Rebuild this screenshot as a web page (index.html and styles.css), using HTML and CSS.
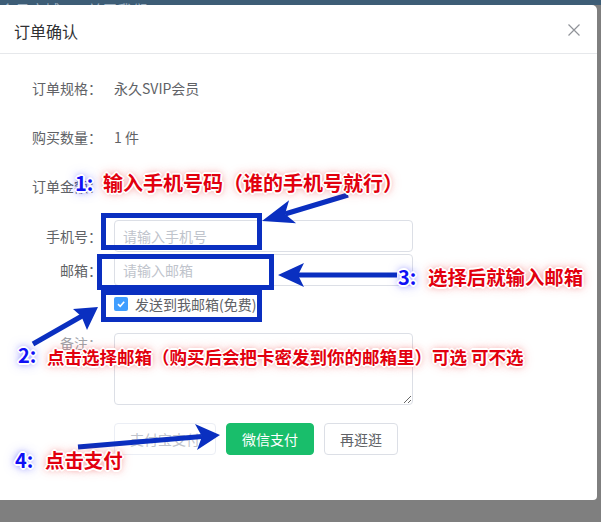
FILE: index.html
```html
<!DOCTYPE html>
<html lang="zh-CN">
<head>
    <meta charset="UTF-8">
    <title>订单确认</title>
    <link rel="stylesheet" href="styles.css">
</head>
<body>
<div class="page">
    <div class="topbar">
        <span>会员商城</span>
        <span>关于我们</span>
    </div>

    <div class="dialog">
        <div class="dialog-header">
            <span class="dialog-title">订单确认</span>
            <span class="dialog-close">
                <svg width="12" height="12" viewBox="0 0 12 12"><path d="M0.5 0.5L11.5 11.5M11.5 0.5L0.5 11.5" stroke="#909399" stroke-width="1.2" fill="none"/></svg>
            </span>
        </div>

        <div class="dialog-body">
            <div class="info-list">
                <div class="info-row"><span class="row-label">订单规格：</span><span class="row-value">永久SVIP会员</span></div>
                <div class="info-row"><span class="row-label">购买数量：</span><span class="row-value">1 件</span></div>
                <div class="info-row"><span class="row-label">订单金额：</span><span class="row-value"></span></div>
            </div>

            <form class="order-form">
                <div class="form-row">
                    <label class="row-label">手机号：</label>
                    <input type="text" class="text-input" placeholder="请输入手机号">
                </div>
                <div class="form-row">
                    <label class="row-label">邮箱：</label>
                    <input type="text" class="text-input" placeholder="请输入邮箱">
                </div>
                <div class="check-row">
                    <span class="check-box">
                        <svg width="10" height="10" viewBox="0 0 10 10"><path d="M2 5.2L4.2 7.3L8.2 2.8" stroke="#fff" stroke-width="1.6" fill="none"/></svg>
                    </span>
                    <span class="check-text">发送到我邮箱(免费)</span>
                </div>
                <div class="area-row">
                    <label class="row-label area-label">备注：</label>
                    <textarea class="text-area"></textarea>
                </div>
                <div class="button-row">
                    <button type="button" class="btn btn-disabled" disabled>支付宝支付</button>
                    <button type="button" class="btn btn-wechat">微信支付</button>
                    <button type="button" class="btn btn-plain">再逛逛</button>
                </div>
            </form>
        </div>
    </div>

    <!-- annotations drawn on top of the dialog -->
    <div class="notes">
        <svg class="marks" width="601" height="522" viewBox="0 0 601 522">
            <g fill="none" stroke="#0a2fc0" stroke-width="5">
                <rect x="103.5" y="215.5" width="156" height="32"/>
                <rect x="99.5" y="256.5" width="172" height="31"/>
                <rect x="103.5" y="292.5" width="156" height="27"/>
                <line x1="348" y1="195" x2="285" y2="214"/>
                <line x1="397" y1="275" x2="298" y2="275"/>
                <line x1="33" y1="344" x2="82" y2="316"/>
                <line x1="78" y1="447" x2="202" y2="436.5"/>
            </g>
            <g fill="#0a2fc0">
                <polygon points="262,221 289.1,200.2 285,214.1 296.1,223.2"/>
                <polygon points="278,275 304,263 298,275 304,287"/>
                <polygon points="98,307 73,309 81.5,316.5 87,330"/>
                <polygon points="220,435 195,424 202,436.5 197,450"/>
            </g>
        </svg>

        <div class="num n1">1:</div>
        <div class="tip t1">输入手机号码（谁的手机号就行）</div>

        <div class="num n2">2:</div>
        <div class="tip t2">点击选择邮箱（购买后会把卡密发到你的邮箱里）可选 可不选</div>

        <div class="num n3">3:</div>
        <div class="tip t3">选择后就输入邮箱</div>

        <div class="num n4">4:</div>
        <div class="tip t4">点击支付</div>
    </div>
</div>
</body>
</html>
```

FILE: styles.css
```css
body {
    margin: 0;
    background-color: #7f7f7f;
    font-family: "Noto Sans CJK SC", "Microsoft YaHei", sans-serif;
}

.page {
    position: relative;
    width: 601px;
    height: 522px;
    overflow: hidden;
    background-color: #7f7f7f;
}

.topbar {
    height: 5px;
    overflow: hidden;
    background-color: #3d5d76;
    color: #9fb2c2;
    font-size: 15px;
    line-height: 20px;
    white-space: nowrap;
}

.topbar span {
    display: inline-block;
    margin-top: -14px;
    margin-right: 24px;
}

.dialog {
    width: 597px;
    height: 495px;
    background-color: #fff;
    border-radius: 0 5px 4px 0;
    box-sizing: border-box;
}

.dialog-header {
    display: flex;
    justify-content: space-between;
    align-items: flex-start;
    padding: 16px 17px 12px 14px;
    border-bottom: 1px solid #e6e8eb;
}

.dialog-title {
    font-size: 16px;
    line-height: 20px;
    color: #303133;
}

.dialog-close {
    display: block;
    width: 12px;
    height: 12px;
    margin-top: 3px;
}

.dialog-close svg {
    display: block;
}

.dialog-body {
    padding: 18px 20px 0 20px;
}

.info-list {
    display: flex;
    flex-direction: column;
    gap: 17px;
    margin-bottom: 18px;
}

.info-row,
.form-row {
    display: flex;
    align-items: center;
    height: 32px;
    font-size: 14px;
    color: #606266;
}

.row-label {
    width: 94px;
    padding-right: 12px;
    box-sizing: border-box;
    text-align: right;
    flex-shrink: 0;
}

.row-value {
    color: #606266;
}

.order-form {
    display: flex;
    flex-direction: column;
    gap: 2px;
    margin: 0;
}

.text-input {
    width: 299px;
    height: 32px;
    box-sizing: border-box;
    padding: 0 8px;
    border: 1px solid #dcdfe6;
    border-radius: 4px;
    font-family: inherit;
    font-size: 14px;
    color: #606266;
    outline: none;
}

.text-input::placeholder {
    color: #c0c4cc;
}

.check-row {
    display: flex;
    align-items: center;
    height: 32px;
    padding-left: 94px;
    font-size: 14px;
    color: #606266;
}

.check-box {
    display: flex;
    align-items: center;
    justify-content: center;
    width: 14px;
    height: 14px;
    border-radius: 2px;
    background-color: #409eff;
    margin-right: 7px;
}

.area-row {
    display: flex;
    align-items: flex-start;
    height: 72px;
    margin-top: 11px;
    font-size: 14px;
    color: #606266;
}

.area-label {
    line-height: 20px;
    color: #a0a3a8;
}

.text-area {
    display: block;
    width: 299px;
    height: 72px;
    margin: 0;
    box-sizing: border-box;
    border: 1px solid #dcdfe6;
    border-radius: 4px;
    font-family: inherit;
    font-size: 14px;
    outline: none;
    resize: both;
}

.button-row {
    display: flex;
    gap: 10px;
    margin-top: 16px;
    padding-left: 94px;
}

.btn {
    height: 32px;
    padding: 0 15px;
    border-radius: 4px;
    font-family: inherit;
    font-size: 14px;
    line-height: 30px;
    cursor: pointer;
}

.btn-disabled {
    background-color: #fff;
    border: 1px solid #ebeef5;
    color: #c0c4cc;
    cursor: not-allowed;
}

.btn-wechat {
    background-color: #19be6b;
    border: 1px solid #19be6b;
    color: #fff;
}

.btn-plain {
    background-color: #fff;
    border: 1px solid #dcdfe6;
    color: #606266;
}

/* annotations */
.notes {
    position: absolute;
    left: 0;
    top: 0;
    width: 601px;
    height: 522px;
    pointer-events: none;
}

.marks {
    position: absolute;
    left: 0;
    top: 0;
}

.num,
.tip {
    position: absolute;
    font-weight: 700;
    line-height: 1;
    white-space: nowrap;
}

.num {
    font-size: 20px;
    color: #1010f5;
    text-shadow: 1px 1px 0 #fff, -1px -1px 0 #fff, 1px -1px 0 #fff, -1px 1px 0 #fff,
        2px 0 0 #fff, -2px 0 0 #fff, 0 2px 0 #fff, 0 -2px 0 #fff,
        0 0 6px rgba(40, 40, 255, 0.7), 0 0 12px rgba(60, 60, 255, 0.5);
}

.tip {
    color: #e2000e;
    text-shadow: 1px 1px 0 #fff, -1px -1px 0 #fff, 1px -1px 0 #fff, -1px 1px 0 #fff,
        2px 0 0 #fff, -2px 0 0 #fff, 0 2px 0 #fff, 0 -2px 0 #fff,
        0 0 6px rgba(235, 40, 40, 0.55), 0 0 12px rgba(235, 60, 60, 0.4);
}

.n1 { left: 75px; top: 173px; }
.t1 { left: 103px; top: 173px; font-size: 20px; }

.n2 { left: 18px; top: 345px; }
.t2 { left: 47px; top: 348px; font-size: 17.5px; }

.n3 { left: 398px; top: 267px; }
.t3 { left: 428px; top: 267px; font-size: 19.4px; }

.n4 { left: 15px; top: 450px; }
.t4 { left: 45px; top: 450px; font-size: 19.4px; }
```
